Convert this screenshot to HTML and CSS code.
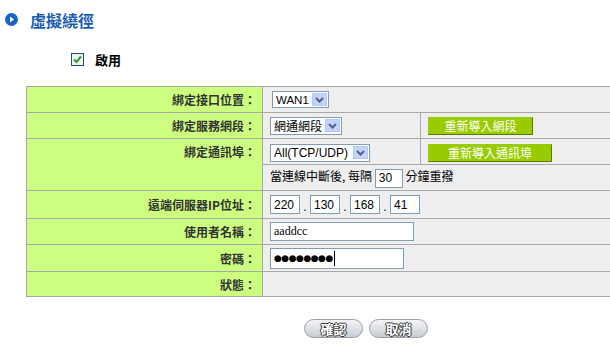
FILE: index.html
```html
<!DOCTYPE html>
<html lang="zh-Hant">
<head>
    <meta charset="UTF-8">
    <title>虛擬繞徑</title>
    <link rel="stylesheet" href="styles.css">
</head>
<body>
    <div class="page">
        <h1 class="title">
            <svg class="bullet" width="13" height="13" viewBox="0 0 13 13">
                <circle cx="6.5" cy="6.5" r="6.5" fill="#1565c8"/>
                <path d="M5 3.5 L9 6.5 L5 9.5 Z" fill="#fff"/>
            </svg>
            虛擬繞徑
        </h1>

        <div class="enable">
            <span class="check">
                <svg width="9" height="9" viewBox="0 0 9 9">
                    <path d="M1 4.5 L3.5 7 L8 1.5" fill="none" stroke="#2aa52a" stroke-width="2"/>
                </svg>
            </span>
            <span class="enable-label">啟用</span>
        </div>

        <table class="form">
            <tr>
                <th>綁定接口位置：</th>
                <td colspan="2">
                    <div class="select w-wan">WAN1<span class="arrow"><svg width="9" height="6" viewBox="0 0 9 6"><path d="M1 1 L4.5 4.5 L8 1" fill="none" stroke="#4d6185" stroke-width="2"/></svg></span></div>
                </td>
            </tr>
            <tr>
                <th>綁定服務網段：</th>
                <td class="narrow">
                    <div class="select w-net">網通網段<span class="arrow"><svg width="9" height="6" viewBox="0 0 9 6"><path d="M1 1 L4.5 4.5 L8 1" fill="none" stroke="#4d6185" stroke-width="2"/></svg></span></div>
                </td>
                <td class="side"><button class="green btn-net">重新導入網段</button></td>
            </tr>
            <tr>
                <th rowspan="2" class="top">綁定通訊埠：</th>
                <td class="narrow">
                    <div class="select w-port">All(TCP/UDP)<span class="arrow"><svg width="9" height="6" viewBox="0 0 9 6"><path d="M1 1 L4.5 4.5 L8 1" fill="none" stroke="#4d6185" stroke-width="2"/></svg></span></div>
                </td>
                <td class="side"><button class="green btn-port">重新導入通訊埠</button></td>
            </tr>
            <tr>
                <td colspan="2" class="redial">當連線中斷後, 每隔 <input class="box w-min" value="30"> 分鐘重撥</td>
            </tr>
            <tr class="tall">
                <th>遠端伺服器IP位址：</th>
                <td colspan="2" class="ip">
                    <input class="box w-ip" value="220"><span class="dot">.</span><input class="box w-ip" value="130"><span class="dot">.</span><input class="box w-ip" value="168"><span class="dot">.</span><input class="box w-ip" value="41">
                </td>
            </tr>
            <tr>
                <th>使用者名稱：</th>
                <td colspan="2"><input class="box serif w-user" value="aaddcc"></td>
            </tr>
            <tr class="mid">
                <th>密碼：</th>
                <td colspan="2"><div class="box w-pass"><span class="dots">●●●●●●●●</span><span class="caret"></span></div></td>
            </tr>
            <tr class="last">
                <th>狀態：</th>
                <td colspan="2"></td>
            </tr>
        </table>

        <div class="actions">
            <button class="pill">確認</button>
            <button class="pill">取消</button>
        </div>
    </div>
</body>
</html>
```

FILE: styles.css
```css
body {
    margin: 0;
    background-color: #ffffff;
    font-family: "Liberation Sans", "Noto Sans CJK TC", sans-serif;
    font-size: 12px;
    color: #000;
    overflow: hidden;
}

.page {
    width: 640px;
}

.title {
    margin: 0;
    padding: 9px 0 0 5px;
    height: 21px;
    display: flex;
    align-items: center;
    font-family: "Noto Sans CJK TC", sans-serif;
    font-size: 16px;
    font-weight: bold;
    color: #1a5db0;
}

.bullet {
    margin-right: 12px;
}

.enable {
    display: flex;
    align-items: center;
    padding: 22px 0 0 71px;
    height: 14px;
}

.check {
    width: 11px;
    height: 11px;
    border: 1px solid #1c5180;
    background-color: #f2f2ee;
    display: flex;
    align-items: center;
    justify-content: center;
}

.enable-label {
    margin-left: 11px;
    font-family: "Noto Sans CJK TC", sans-serif;
    font-weight: bold;
    font-size: 13px;
}

.form {
    margin: 20px 0 0 26px;
    width: 600px;
    border-collapse: collapse;
    border: 1px solid #a8a8a8;
}

.form tr {
    height: 26px;
}

.form tr.tall {
    height: 28px;
}

.form tr.mid {
    height: 27px;
}

.form tr.last {
    height: 25px;
}

.form th {
    width: 229px;
    padding: 0 6px 0 0;
    background-color: #ccff80;
    border: 1px solid #a8a8a8;
    text-align: right;
    font-family: "Noto Sans CJK TC", sans-serif;
    font-size: 12px;
    font-weight: bold;
    color: #333;
    white-space: nowrap;
}

.form th.top {
    vertical-align: top;
    padding-top: 4px;
}

.form td {
    background-color: #eeeeee;
    border: 1px solid #a8a8a8;
    padding: 0 0 0 7px;
    white-space: nowrap;
}

.form td.narrow {
    width: 150px;
}

.form td.side {
    padding-left: 7px;
}

.select {
    display: inline-flex;
    align-items: center;
    justify-content: space-between;
    height: 17px;
    box-sizing: border-box;
    border: 1px solid #7f9db9;
    background-color: #fff;
    padding: 0 1px 0 3px;
    font-size: 12px;
    vertical-align: middle;
}

.arrow {
    width: 15px;
    height: 13px;
    background-color: #c3d3fd;
    border: 1px solid #b6c8f5;
    box-sizing: border-box;
    display: flex;
    align-items: center;
    justify-content: center;
}

.w-wan {
    width: 57px;
    margin-left: 2px;
    font-size: 11.5px;
}

.w-net {
    width: 72px;
    height: 18px;
}

.w-port {
    width: 100px;
    height: 18px;
    margin-top: 2px;
}

.green {
    background-color: #99cc00;
    color: #fff;
    border: 1px solid #99cc00;
    border-right-color: #5a7a00;
    border-bottom-color: #5a7a00;
    font-family: "Noto Sans CJK TC", sans-serif;
    font-size: 12px;
    height: 18px;
    padding: 0;
    line-height: 16px;
    cursor: pointer;
}

.btn-net {
    width: 105px;
}

.btn-port {
    width: 124px;
    margin-top: 2px;
}

.redial {
    font-family: "Noto Sans CJK TC", sans-serif;
}

.box {
    box-sizing: border-box;
    height: 19px;
    border: 1px solid #7f9db9;
    background-color: #fff;
    padding: 0 3px;
    font-family: "Liberation Sans", sans-serif;
    font-size: 12px;
    vertical-align: middle;
    outline: none;
}

.w-min {
    width: 28px;
}

.ip {
    padding-left: 6px;
}

.w-ip {
    width: 30px;
}

.dot {
    display: inline-block;
    width: 10px;
    text-align: center;
    vertical-align: bottom;
}

.serif {
    font-family: "Liberation Serif", serif;
    font-size: 12px;
}

.w-user {
    width: 144px;
}

.w-pass {
    width: 134px;
    height: 21px;
    display: flex;
    align-items: center;
    padding-left: 3px;
}

.dots {
    font-family: "DejaVu Sans", sans-serif;
    font-size: 9px;
    letter-spacing: -0.5px;
}

.caret {
    width: 1px;
    height: 15px;
    background-color: #000;
    margin-left: 1px;
}

.actions {
    display: flex;
    gap: 6px;
    padding: 22px 0 0 304px;
}

.pill {
    width: 59px;
    height: 19px;
    border: 1px solid #9aa0a8;
    border-radius: 10px;
    background: linear-gradient(#f4f5f7, #c8ccd2);
    color: #fff;
    font-family: "Noto Sans CJK TC", sans-serif;
    font-size: 13px;
    font-weight: bold;
    line-height: 15px;
    padding: 0;
    text-shadow: 1px 0 0 #333, -1px 0 0 #333, 0 1px 0 #333, 0 -1px 0 #333;
    cursor: pointer;
}
```
